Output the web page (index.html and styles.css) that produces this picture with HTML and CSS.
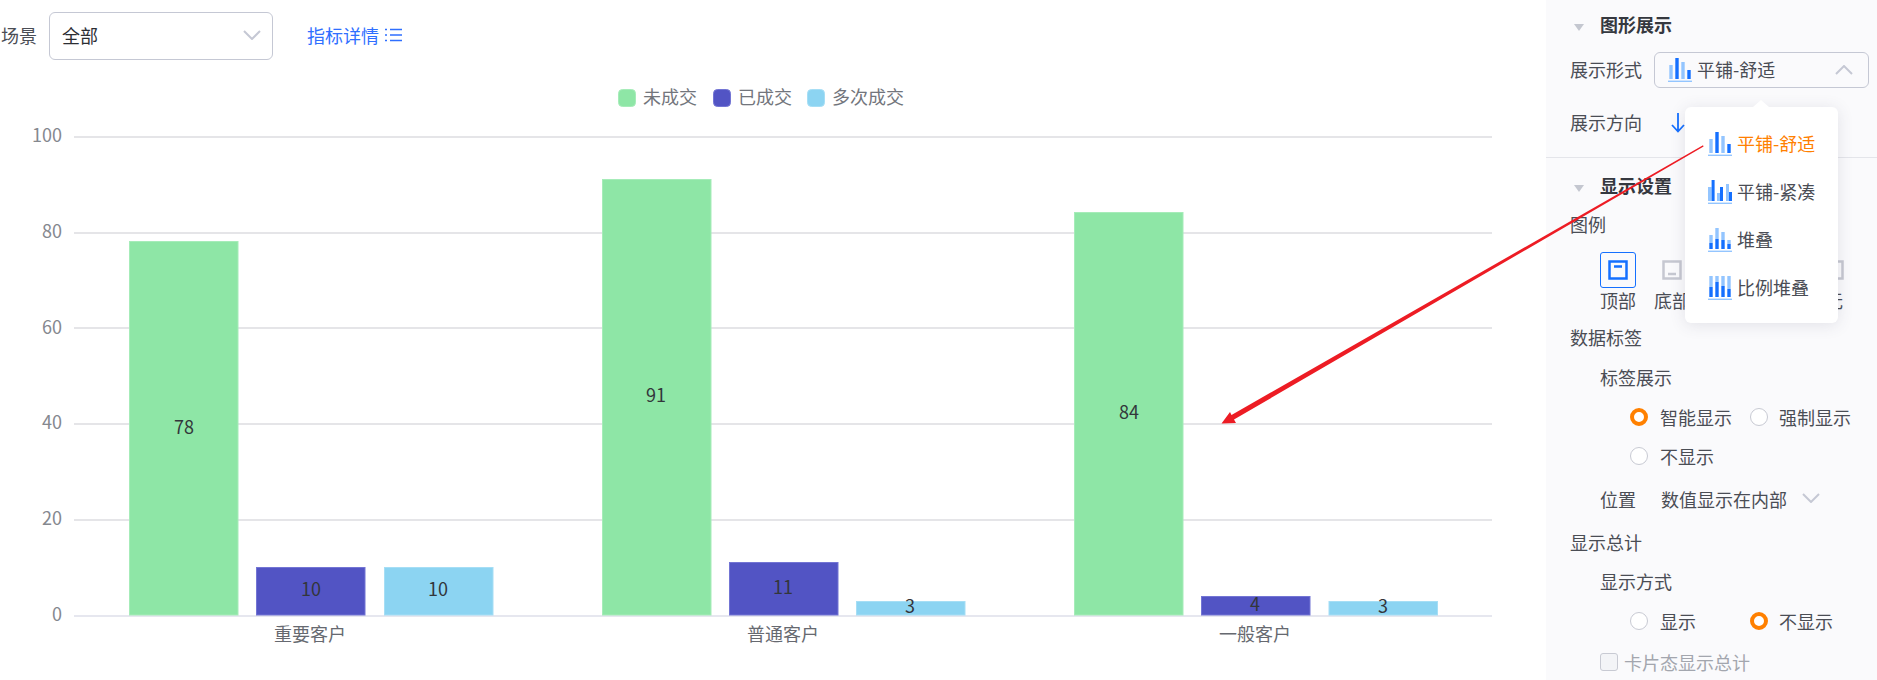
FILE: index.html
```html
<!DOCTYPE html>
<html lang="zh">
<head>
<meta charset="utf-8">
<title>图形展示</title>
<link rel="stylesheet" href="styles.css">
</head>
<body>
<svg class="defs" width="0" height="0" aria-hidden="true">
  <defs>
    <symbol id="i-comfy" viewBox="0 0 24 24">
      <rect class="lt" x="1.3" y="7" width="3.4" height="14"/>
      <rect class="dk" x="7.3" y="0" width="3.4" height="21"/>
      <rect class="lt" x="13.3" y="4" width="3.4" height="17"/>
      <rect class="dk" x="19.3" y="12" width="3.4" height="9"/>
      <rect class="lt" x="0" y="22.6" width="24" height="1.4"/>
    </symbol>
    <symbol id="i-compact" viewBox="0 0 24 24">
      <rect class="lt" x="0" y="7" width="3.6" height="14"/>
      <rect class="dk" x="3.6" y="0" width="3" height="21"/>
      <rect class="lt" x="9" y="13" width="3" height="8"/>
      <rect class="dk" x="12" y="7" width="3" height="14"/>
      <rect class="lt" x="18" y="4" width="3" height="17"/>
      <rect class="dk" x="21" y="12" width="3" height="9"/>
      <rect class="lt" x="0" y="22.6" width="24" height="1.4"/>
    </symbol>
    <symbol id="i-stack" viewBox="0 0 24 24">
      <rect class="lt" x="1.3" y="7" width="3.4" height="8"/><rect class="dk" x="1.3" y="15" width="3.4" height="6"/>
      <rect class="lt" x="7.3" y="0" width="3.4" height="11"/><rect class="dk" x="7.3" y="11" width="3.4" height="10"/>
      <rect class="lt" x="13.3" y="4" width="3.4" height="8"/><rect class="dk" x="13.3" y="12" width="3.4" height="9"/>
      <rect class="lt" x="19.3" y="12" width="3.4" height="4"/><rect class="dk" x="19.3" y="16" width="3.4" height="5"/>
      <rect class="lt" x="0" y="22.6" width="24" height="1.4"/>
    </symbol>
    <symbol id="i-percent" viewBox="0 0 24 24">
      <rect class="lt" x="1.3" y="0" width="3.4" height="11"/><rect class="dk" x="1.3" y="11" width="3.4" height="10"/>
      <rect class="lt" x="7.3" y="0" width="3.4" height="6"/><rect class="dk" x="7.3" y="6" width="3.4" height="15"/>
      <rect class="lt" x="13.3" y="0" width="3.4" height="10"/><rect class="dk" x="13.3" y="10" width="3.4" height="11"/>
      <rect class="lt" x="19.3" y="0" width="3.4" height="13"/><rect class="dk" x="19.3" y="13" width="3.4" height="8"/>
      <rect class="lt" x="0" y="22.6" width="24" height="1.4"/>
    </symbol>
  </defs>
</svg>

<div class="page">
  <main class="main">
    <div class="toolbar">
      <span class="tb-label">场景</span>
      <div class="tb-select">
        <span>全部</span>
        <svg class="chev" width="18" height="10" viewBox="0 0 18 10"><path d="M1 1l8 8 8-8"/></svg>
      </div>
      <a class="tb-link">指标详情
        <svg class="list-ico" width="17" height="14" viewBox="0 0 17 14"><path d="M0 1.5h2M0 7h2M0 12.500h2M5 1.500h12M5 7h12M5 12.500h12"/></svg>
      </a>
    </div>

    <svg class="chart" width="1546" height="608" viewBox="0 72 1546 608">
      <!-- legend -->
      <rect class="c-green" x="618.500" y="89.500" width="17" height="17" rx="4"/>
      <text class="lg" x="643" y="97">未成交</text>
      <rect class="c-blue" x="713.500" y="89.500" width="17" height="17" rx="4"/>
      <text class="lg" x="738" y="97">已成交</text>
      <rect class="c-sky" x="807.500" y="89.500" width="17" height="17" rx="4"/>
      <text class="lg" x="832" y="97">多次成交</text>

      <!-- grid -->
      <g class="grid">
        <rect x="74" y="136" width="1418" height="2"/>
        <rect x="74" y="232" width="1418" height="2"/>
        <rect x="74" y="327" width="1418" height="2"/>
        <rect x="74" y="423" width="1418" height="2"/>
        <rect x="74" y="519" width="1418" height="2"/>
      </g>
      <rect class="axis" x="74" y="615" width="1418" height="2"/>

      <!-- y axis -->
      <g class="ya">
        <text x="62" y="135">100</text>
        <text x="62" y="231">80</text>
        <text x="62" y="327">60</text>
        <text x="62" y="422">40</text>
        <text x="62" y="518">20</text>
        <text x="62" y="614">0</text>
      </g>

      <!-- bars -->
      <rect class="c-green" x="129.500" y="241.500" width="108.500" height="373.500"/>
      <rect class="c-blue" x="256.500" y="567.500" width="108.500" height="47.500"/>
      <rect class="c-sky" x="384.500" y="567.500" width="108.500" height="47.500"/>
      <rect class="c-green" x="602.500" y="179.500" width="108.500" height="435.500"/>
      <rect class="c-blue" x="729.500" y="562.500" width="108.500" height="52.500"/>
      <rect class="c-sky" x="856.500" y="601.500" width="108.500" height="13.500"/>
      <rect class="c-green" x="1074.500" y="212.500" width="108.500" height="402.500"/>
      <rect class="c-blue" x="1201.500" y="596.500" width="108.500" height="18.500"/>
      <rect class="c-sky" x="1329" y="601.500" width="108.500" height="13.500"/>

      <!-- bar values -->
      <g class="val">
        <text x="184" y="427">78</text>
        <text x="311" y="589">10</text>
        <text x="438" y="589">10</text>
        <text x="656" y="395">91</text>
        <text x="783" y="587">11</text>
        <text x="910" y="606">3</text>
        <text x="1129" y="412">84</text>
        <text x="1255" y="604">4</text>
        <text x="1383" y="606">3</text>
      </g>

      <!-- categories -->
      <g class="cat">
        <text x="310" y="634">重要客户</text>
        <text x="783" y="634">普通客户</text>
        <text x="1255" y="634">一般客户</text>
      </g>
    </svg>
  </main>

  <aside class="side">
    <div class="sec-head"><i class="tri"></i>图形展示</div>
    <div class="row r-form">
      <span class="lab">展示形式</span>
      <div class="fm-select">
        <svg class="bi" width="24" height="24"><use href="#i-comfy"/></svg>
        <span class="fm-text">平铺-舒适</span>
        <svg class="chev up" width="18" height="10" viewBox="0 0 18 10"><path d="M1 9l8-8 8 8"/></svg>
      </div>
    </div>
    <div class="row r-dir">
      <span class="lab">展示方向</span>
      <svg class="dir" width="14" height="20" viewBox="0 0 14 20"><path d="M7 0v18M1 12l6 6.500 6-6.500"/></svg>
    </div>
    <div class="divider"></div>
    <div class="sec-head h2"><i class="tri"></i>显示设置</div>
    <div class="row r-legend">图例</div>
    <div class="pos-list">
      <div class="pos">
        <div class="pos-box on"><svg width="20" height="20" viewBox="0 0 20 20"><path d="M1.500 1.500h17v17h-17zM6 6.500h8"/></svg></div>
        <span>顶部</span>
      </div>
      <div class="pos">
        <div class="pos-box"><svg width="20" height="20" viewBox="0 0 20 20"><path d="M1.500 1.500h17v17h-17zM6 14h8"/></svg></div>
        <span>底部</span>
      </div>
      <div class="pos">
        <div class="pos-box"><svg width="20" height="20" viewBox="0 0 20 20"><path d="M1.500 1.500h17v17h-17zM6 6v8"/></svg></div>
        <span>左侧</span>
      </div>
      <div class="pos">
        <div class="pos-box"><svg width="20" height="20" viewBox="0 0 20 20"><path d="M1.500 1.500h17v17h-17zM14 6v8"/></svg></div>
        <span>右侧</span>
      </div>
      <div class="pos">
        <div class="pos-box"><svg width="20" height="20" viewBox="0 0 20 20"><path d="M1.500 1.500h17v17h-17z"/></svg></div>
        <span>无</span>
      </div>
    </div>
    <div class="row r-data">数据标签</div>
    <div class="row in r-m10">标签展示</div>
    <div class="row radios r-m10">
      <label class="rad"><i class="dot on"></i>智能显示</label>
      <label class="rad"><i class="dot"></i>强制显示</label>
    </div>
    <div class="row radios r-m9">
      <label class="rad"><i class="dot"></i>不显示</label>
    </div>
    <div class="row in r-m13">
      <span class="pos-lab">位置</span>
      <span>数值显示在内部</span>
      <svg class="chev pos-chev" width="18" height="10" viewBox="0 0 18 10"><path d="M1 1l8 8 8-8"/></svg>
    </div>
    <div class="row r-m13">显示总计</div>
    <div class="row in r-m9">显示方式</div>
    <div class="row radios r-m10">
      <label class="rad"><i class="dot"></i>显示</label>
      <label class="rad"><i class="dot on"></i>不显示</label>
    </div>
    <div class="row in r-m10 muted">
      <i class="check"></i>卡片态显示总计
    </div>
  </aside>
</div>

<div class="menu">
  <div class="menu-item active"><svg class="bi" width="24" height="24"><use href="#i-comfy"/></svg><span>平铺-舒适</span></div>
  <div class="menu-item"><svg class="bi" width="24" height="24"><use href="#i-compact"/></svg><span>平铺-紧凑</span></div>
  <div class="menu-item"><svg class="bi" width="24" height="24"><use href="#i-stack"/></svg><span>堆叠</span></div>
  <div class="menu-item"><svg class="bi" width="24" height="24"><use href="#i-percent"/></svg><span>比例堆叠</span></div>
</div>

<svg class="annot" width="1877" height="680" viewBox="0 0 1877 680" aria-hidden="true">
  <polygon points="1703,145.300 1703.600,146.500 1234,419.500 1236,423 1221.500,423.500 1230,412 1231.500,415"/>
</svg>
</body>
</html>
```

FILE: styles.css
```css
* { box-sizing: border-box; }
html, body { margin: 0; padding: 0; height: 680px; overflow: hidden; background: #fff; }
body {
  position: relative;
  font-family: "Noto Sans CJK SC", "Noto Sans", sans-serif;
  font-size: 18px;
  color: #4a4d55;
}
.defs { position: absolute; }
.lt { fill: #93c5ff; }
.dk { fill: #1570ff; }
.page { display: flex; width: 1877px; height: 680px; }
.main { width: 1546px; flex: none; }

/* toolbar */
.toolbar { display: flex; align-items: center; height: 72px; padding-left: 1px; }
.tb-label { width: 48px; padding-bottom: 2px; }
.tb-select {
  display: flex; align-items: center; justify-content: space-between;
  width: 224px; height: 48px;
  padding: 0 11px 2px 12px;
  border: 1px solid #c5c8d4; border-radius: 6px; color: #2c2e33;
}
.chev { fill: none; stroke: #c5c8d4; stroke-width: 2; flex: none; }
.tb-link {
  display: flex; align-items: center; gap: 6px;
  margin-left: 34px; color: #2f6fff;
  margin-top: -2px;
}
.list-ico { fill: none; stroke: #2f6fff; stroke-width: 1.400; }

/* chart */
.chart { display: block; }
.chart text {
  font-family: "Noto Sans CJK SC", "Noto Sans", sans-serif; font-size: 18px;
  dominant-baseline: central; transform: translateY(-1px);
}
.c-green { fill: #8ee6a6; stroke: #a6ecb9; stroke-width: 1; }
.c-blue { fill: #5254c4; stroke: #7375d4; stroke-width: 1; }
.c-sky { fill: #8cd4f2; stroke: #a6def5; stroke-width: 1; }
.grid rect { fill: #e5e5e8; }
.axis { fill: #e6e7ef; }
.lg { fill: #72757c; }
.ya text { fill: #85888f; text-anchor: end; }
.val text { fill: #33363b; text-anchor: middle; }
.cat text { fill: #666970; text-anchor: middle; }

/* side panel */
.side { width: 331px; flex: none; background: #fafafc; padding: 10px 8px 0 24px; }
.row { display: flex; align-items: center; height: 30px; padding-bottom: 2px; }
.sec-head {
  display: flex; align-items: center; height: 30px; padding-bottom: 2px;
  font-weight: 700; color: #35383f;
}
.sec-head.h2 { margin-top: 13px; }
.tri {
  width: 0; height: 0; margin: 6px 16px 0 4px;
  border-left: 5px solid transparent; border-right: 5px solid transparent;
  border-top: 7px solid #c4c7d0;
}
.r-form { margin-top: 12px; height: 36px; padding-bottom: 0; }
.lab { width: 84px; flex: none; padding-bottom: 2px; }
.fm-select {
  display: flex; align-items: center; flex: 1; height: 36px;
  padding: 0 15px 0 13px;
  border: 1px solid #c5c8d4; border-radius: 6px;
}
.fm-text { margin-left: 5px; flex: 1; padding-bottom: 2px; }
.r-dir { margin-top: 17px; height: 36px; padding-bottom: 0; }
.dir { margin-left: 17px; fill: none; stroke: #1570ff; stroke-width: 1.800; }
.divider { height: 1px; margin: 16px -8px 0 -24px; background: #e4e5ea; }
.r-legend { margin-top: 9px; }
.pos-list { display: flex; gap: 18px; margin: 12px 0 0 30px; }
.pos { display: flex; flex-direction: column; align-items: center; width: 36px; flex: none; }
.pos span { display: block; height: 24px; line-height: 24px; white-space: nowrap; }
.pos-box {
  display: flex; align-items: center; justify-content: center;
  width: 36px; height: 36px; border: 1px solid transparent; border-radius: 3px;
}
.pos-box svg { fill: none; stroke: #c6c8d1; stroke-width: 2.500; }
.pos-box.on { border-color: #1570ff; }
.pos-box.on svg { stroke: #1570ff; }
.r-data { margin-top: 11px; }
.in { padding-left: 30px; }
.r-m9 { margin-top: 9px; }
.r-m10 { margin-top: 10px; }
.r-m13 { margin-top: 13px; }
.radios { padding-left: 60px; }
.rad { display: flex; align-items: center; width: 120px; flex: none; white-space: nowrap; }
.dot {
  width: 18px; height: 18px; margin-right: 12px; flex: none;
  border: 1px solid #c8cad3; border-radius: 50%; background: #fff;
}
.dot.on { border: 4.500px solid #ff8000; }
.rad:nth-child(2) .dot { margin-right: 11px; }
.pos-lab { width: 61px; }
.pos-chev { margin-left: 15px; margin-top: -2px; }
.muted { color: #a3a6ae; padding-bottom: 0; }
.check {
  width: 18px; height: 18px; margin-right: 6px; flex: none;
  border: 1px solid #c8cad3; border-radius: 3px; background: #f3f4f7;
}

/* popup menu */
.menu {
  position: absolute; left: 1685px; top: 107px;
  width: 153px; height: 216px; padding: 13px 0 0 23px;
  background: #fff; border-radius: 6px;
  box-shadow: 0 2px 16px rgba(60, 65, 90, .13);
}
.menu::before {
  content: ""; position: absolute; left: 68px; top: -7px;
  width: 0; height: 0;
  border-left: 8px solid transparent; border-right: 8px solid transparent;
  border-bottom: 7px solid #fff;
}
.menu-item { display: flex; align-items: center; height: 48px; white-space: nowrap; }
.menu-item .bi { margin-right: 5px; flex: none; }
.menu-item span { padding-bottom: 2px; }
.menu-item.active { color: #ff8000; }

/* annotation arrow */
.annot { position: absolute; left: 0; top: 0; pointer-events: none; }
.annot polygon { fill: #ed1c24; }
```
